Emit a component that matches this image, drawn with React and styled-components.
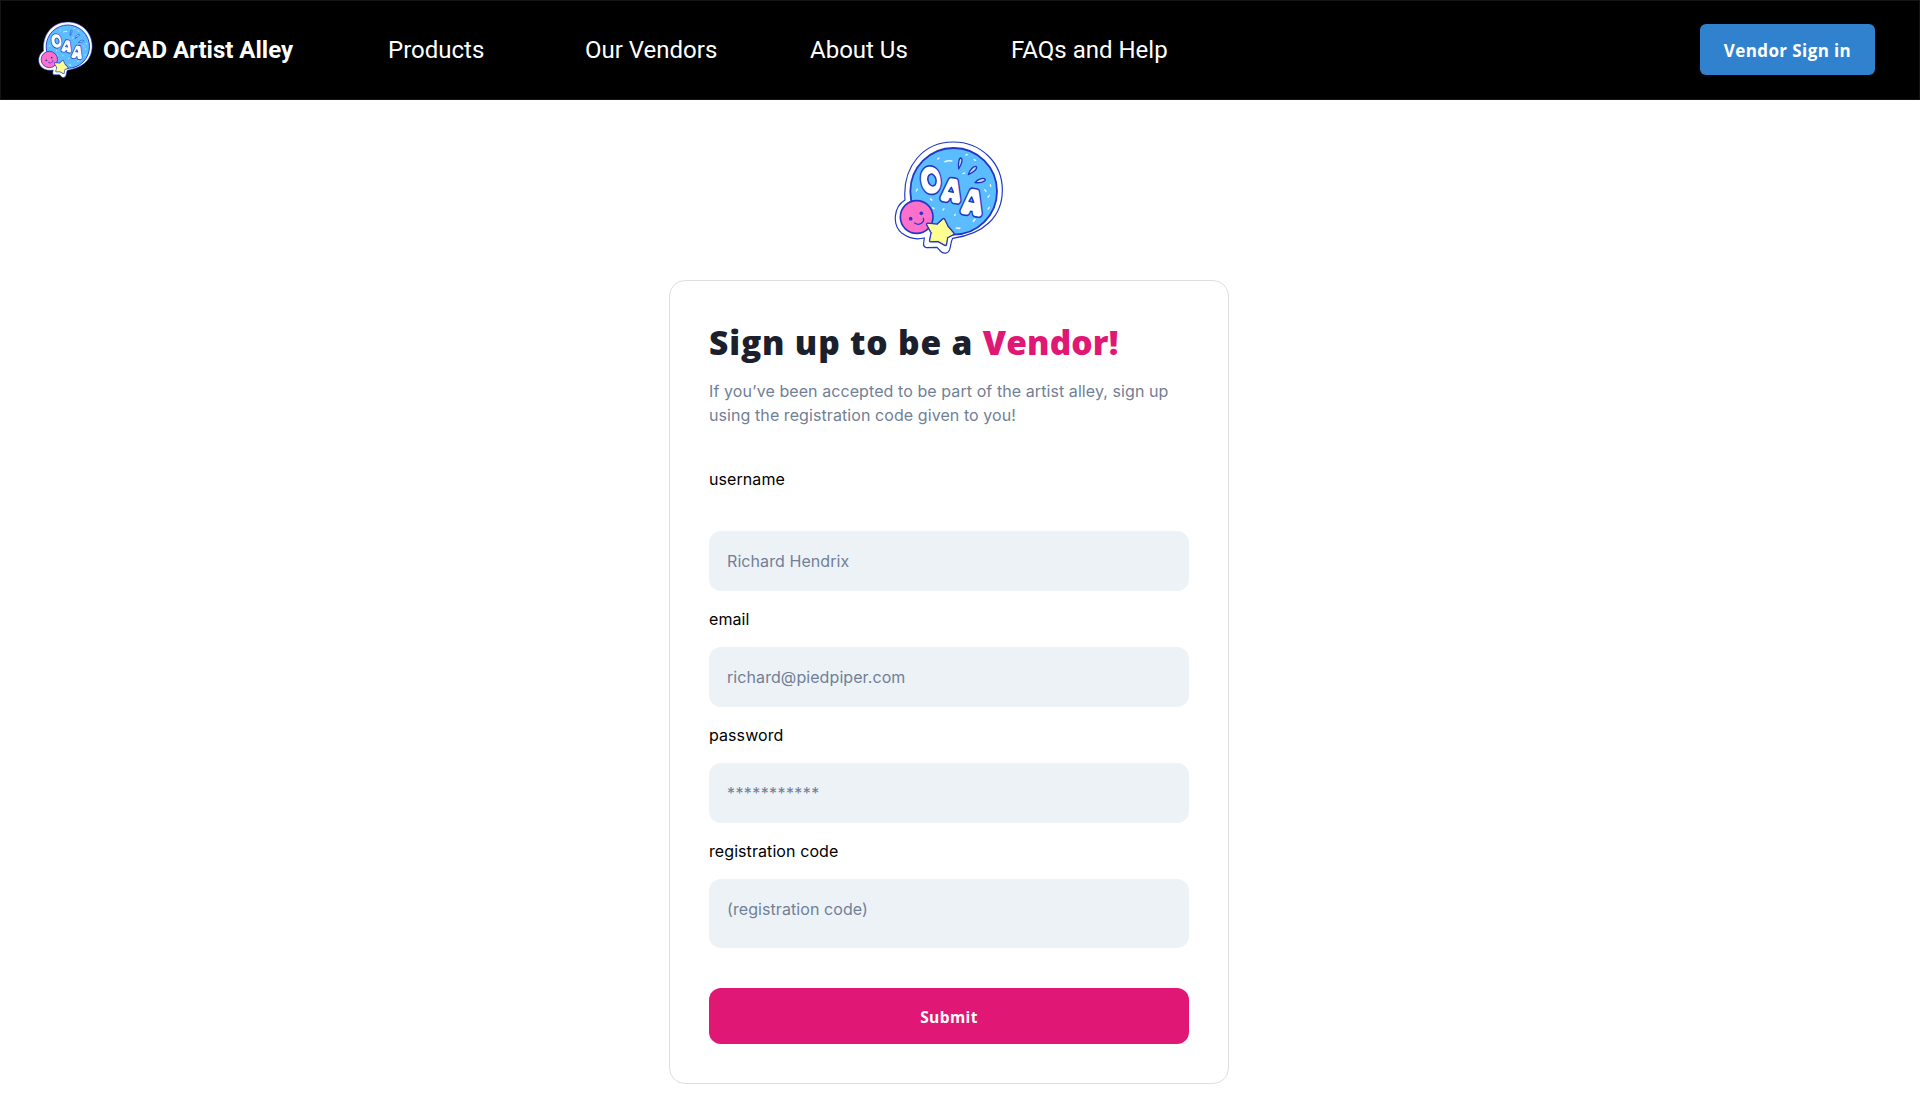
import React from "react";
import styled, { createGlobalStyle } from "styled-components";

const GlobalStyle = createGlobalStyle`
  *, *::before, *::after { box-sizing: border-box; }
  body {
    margin: 0;
    background: #fff;
    font-family: Inter, sans-serif;
    -webkit-font-smoothing: antialiased;
  }
`;

const Page = styled.div`
  min-height: 1114px;
`;

const Header = styled.header`
  display: flex;
  align-items: center;
  height: 100px;
  padding: 0 44px 0 36.5px;
  background: #000;
  border: 1px solid #141414;
`;

const Brand = styled.a`
  display: flex;
  align-items: center;
  gap: 10.5px;
  width: 350.5px;
  color: #fff;
  font: 700 24px/28px Roboto, sans-serif;
  white-space: nowrap;
`;

const Nav = styled.nav`
  display: flex;
  flex: 1;
`;

const NavLink = styled.a`
  width: ${(p) => p.$width}px;
  color: #fff;
  font: 400 24px/28px Roboto, sans-serif;
  white-space: nowrap;
`;

const SignInButton = styled.button`
  width: 175px;
  height: 51px;
  margin-bottom: 1px;
  padding: 2px 0 0;
  border: 0;
  border-radius: 6px;
  background: #3182ce;
  color: #fff;
  font: 700 17px/24px "Open Sans", sans-serif;
  letter-spacing: 0.4px;
  white-space: nowrap;
`;

const Main = styled.main`
  display: flex;
  flex-direction: column;
  align-items: center;
  gap: 25px;
  padding: 40px 22px 30px 0;
`;

const Card = styled.form`
  display: flex;
  flex-direction: column;
  width: 560px;
  height: 804px;
  padding: 39px;
  border: 1px solid #dedede;
  border-radius: 16px;
  background: #fff;
`;

const Title = styled.h1`
  margin: 0 0 16px;
  padding-top: 1px;
  color: #1a202c;
  font: 800 33.5px/42px "Open Sans", sans-serif;
  letter-spacing: 0.84px;
  white-space: nowrap;
`;

const Accent = styled.span`
  color: #e11775;
  letter-spacing: 0.15px;
`;

const Intro = styled.p`
  margin: 0 0 40px;
  color: #718096;
  font-size: 16px;
  line-height: 24px;
  letter-spacing: 0.08px;
`;

const Field = styled.label`
  display: flex;
  flex-direction: column;
  gap: ${(p) => p.$gap || 16}px;
  margin-bottom: 16px;
  color: #000;
  font-size: 16px;
  line-height: 24px;
  letter-spacing: 0.08px;
`;

const Input = styled.input`
  width: 100%;
  height: ${(p) => (p.$tall ? 69 : 60)}px;
  padding: 18px 18px ${(p) => (p.$tall ? 27 : 18)}px;
  border: 0;
  border-radius: 12px;
  outline: 0;
  background: #edf2f7;
  font: 400 16px/24px Inter, sans-serif;
  letter-spacing: ${(p) => p.$tracking || 0.08}px;
  &::placeholder {
    color: #718096;
    opacity: 1;
  }
`;

const SubmitButton = styled.button`
  height: 57px;
  margin-top: 24px;
  padding: 2px 0 0;
  border: 0;
  border-radius: 12px;
  background: #e11775;
  color: #fff;
  font: 700 15.5px/24px "Open Sans", sans-serif;
  letter-spacing: 0.4px;
`;

const LogoSvg = styled.svg`
  display: block;
  flex: none;
  width: ${(p) => p.$w}px;
  height: ${(p) => p.$h}px;
`;

const INK = "#2138c4";
const SILHOUETTE =
  "M220 36C302 36 367 98 367 180C367 260 312 312 218 325C213 334 213 345 209 359C205 371 190 373 181 363L171 352L139 353C131 352 130 346 131 338L133 324C112 329 86 325 66 310C36 285 40 231 75 210C67 110 129 36 220 36Z";
const STAR = "M191 269L201 290L219 311L200 321L196 343L174 331L152 332L157 308L143 283L172 286Z";

function Logo({ w, h }) {
  return (
    <LogoSvg $w={w} $h={h} viewBox="42 30 330 345" aria-label="OAA">
      <path d={SILHOUETTE} fill="#fff" stroke={INK} strokeWidth="3.5" />
      <circle cx="221" cy="184" r="130" fill="#5bbcff" stroke={INK} strokeWidth="5.5" />
      <g stroke="#e9f8ff" strokeWidth="4" strokeLinecap="round" fill="none">
        <path
          strokeWidth="5"
          d="M195 95Q204 91 215 93M229 294l10 1M280 274l5-6M152 207l3 3"
        />
        <path d="M173 87l4-3M258 75l4-1M282 89l5 2M112 177l-3 6M158 233l4 3M189 240l3-4M224 256l2-3M328 232l-4 5M324 202l4-6M318 184l-4-5M331 164l1 5M249 131l5-2" />
      </g>
      <g fill="#c8dcff" stroke={INK} strokeWidth="4" strokeLinejoin="round">
        <path d="M236 117C234 101 237 84 242 84C249 85 247 99 236 117Z" />
        <path d="M265 134C268 121 282 106 289 110C293 116 281 127 265 134Z" />
        <path d="M285 158C293 147 311 142 316 148C316 156 301 159 285 158Z" />
      </g>
      <g
        fontFamily="Inter, sans-serif"
        fontWeight="700"
        textAnchor="middle"
        strokeLinejoin="round"
      >
        {[
          { stroke: INK, width: 27 },
          { stroke: "#fff", width: 17 },
        ].map((layer) => (
          <g key={layer.stroke} stroke={layer.stroke} strokeWidth={layer.width} fill="#fff">
            <text fontSize="86" transform="translate(157 181) rotate(-9) scale(.77 1)">O</text>
            <text fontSize="74" transform="translate(211 208) rotate(9) scale(.86 1)">A</text>
            <text fontSize="84" transform="translate(273 247) rotate(9) scale(.83 1)">A</text>
          </g>
        ))}
      </g>
      <g fill="#5bbcff" stroke={INK} strokeWidth="4.5" strokeLinejoin="round">
        <ellipse cx="156" cy="150" rx="12" ry="18" transform="rotate(-14 156 150)" />
        <path d="M214 172l-8 12 14 3Z" />
        <path d="M275 201l-8 13 14 3Z" />
      </g>
      <circle cx="110" cy="261" r="49" fill="#ff70cb" stroke={INK} strokeWidth="5" />
      <circle cx="92" cy="266" r="5.5" fill={INK} />
      <circle cx="124" cy="250" r="5.5" fill={INK} />
      <path
        d="M104 279Q119 289 130 274Q132 270 130 265"
        fill="none"
        stroke={INK}
        strokeWidth="4"
        strokeLinecap="round"
      />
      <path d={STAR} fill={INK} stroke={INK} strokeWidth="11" strokeLinejoin="round" />
      <path d={STAR} fill="#ffff91" stroke="#ffff91" strokeWidth="3" strokeLinejoin="round" />
    </LogoSvg>
  );
}

export default function App() {
  return (
    <Page>
      <GlobalStyle />
      <Header>
        <Brand>
          <Logo w={55} h={57.5} />
          OCAD Artist Alley
        </Brand>
        <Nav>
          <NavLink $width={197}>Products</NavLink>
          <NavLink $width={225}>Our Vendors</NavLink>
          <NavLink $width={201}>About Us</NavLink>
          <NavLink $width={160}>FAQs and Help</NavLink>
        </Nav>
        <SignInButton>Vendor Sign in</SignInButton>
      </Header>
      <Main>
        <Logo w={110} h={115} />
        <Card>
          <Title>
            Sign up to be a <Accent>Vendor!</Accent>
          </Title>
          <Intro>
            If you’ve been accepted to be part of the artist alley, sign up
            <br />
            using the registration code given to you!
          </Intro>
          <Field $gap={40}>
            username
            <Input placeholder="Richard Hendrix" />
          </Field>
          <Field>
            email
            <Input placeholder="richard@piedpiper.com" />
          </Field>
          <Field>
            password
            <Input $tracking={0.4} placeholder="***********" />
          </Field>
          <Field>
            registration code
            <Input $tall placeholder="(registration code)" />
          </Field>
          <SubmitButton type="button">Submit</SubmitButton>
        </Card>
      </Main>
    </Page>
  );
}
